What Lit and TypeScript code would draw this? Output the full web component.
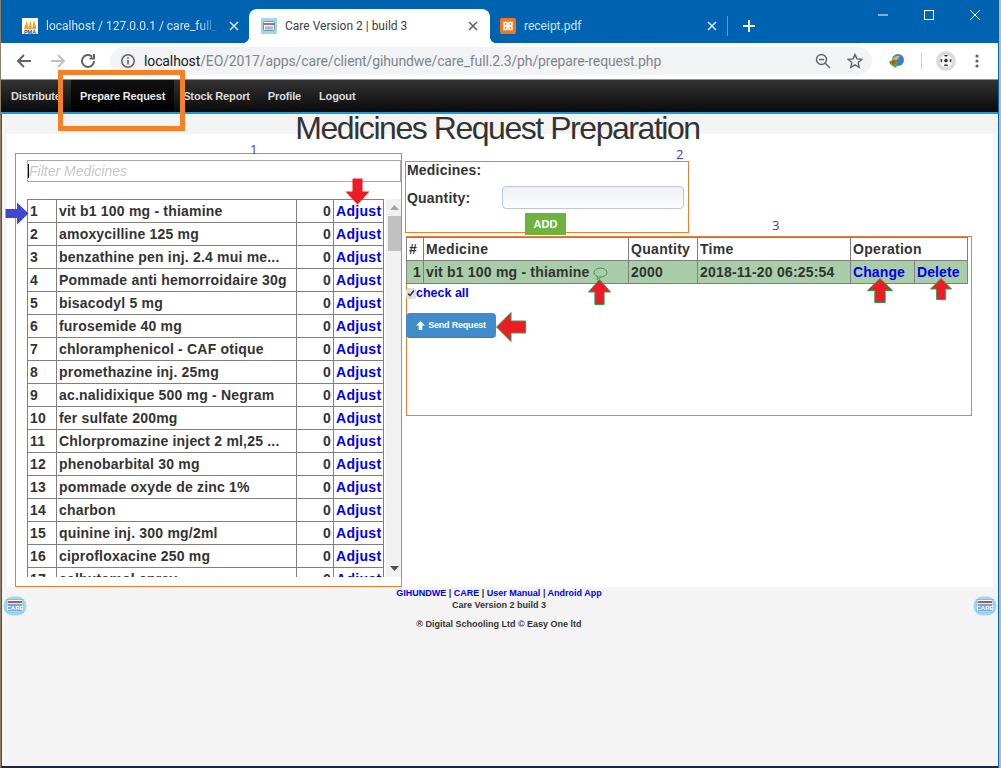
import { LitElement, html, css, svg } from "lit";
import { customElement } from "lit/decorators.js";

const MEDICINES = [
  "vit b1 100 mg - thiamine",
  "amoxycilline 125 mg",
  "benzathine pen inj. 2.4 mui me...",
  "Pommade anti hemorroidaire 30g",
  "bisacodyl 5 mg",
  "furosemide 40 mg",
  "chloramphenicol - CAF otique",
  "promethazine inj. 25mg",
  "ac.nalidixique 500 mg - Negram",
  "fer sulfate 200mg",
  "Chlorpromazine inject 2 ml,25 ...",
  "phenobarbital 30 mg",
  "pommade oxyde de zinc 1%",
  "charbon",
  "quinine inj. 300 mg/2ml",
  "ciprofloxacine 250 mg",
  "salbutamol spray",
];

const careIcon = (w: number, h: number) => html`
  <svg width=${w} height=${h} viewBox="0 0 24 20">
    <rect x="0.5" y="0.5" width="23" height="19" rx="9" fill="#9fd8ea" />
    <rect x="4" y="3.5" width="16" height="12.5" fill="#f2fafc" stroke="#7cc4da" />
    <rect x="5" y="5" width="14" height="2" fill="#c0504d" />
    <rect x="5" y="8" width="14" height="7" fill="#6fa8d6" />
    <text x="12" y="14.2" font-size="6" font-weight="700" text-anchor="middle" fill="#fff" font-family="Liberation Sans">CARE</text>
  </svg>
`;

// points of a block arrow pointing up, drawn in a w x h box
const upArrow = (w: number, h: number) => {
  const head = h * 0.5;
  const a = w * 0.3;
  return `${w / 2},0.5 ${w - 0.5},${head} ${w - a},${head} ${w - a},${h - 0.5} ${a},${h - 0.5} ${a},${head} 0.5,${head}`;
};

@customElement("app-root")
export class AppRoot extends LitElement {
  static styles = css`
    :host {
      display: block;
      height: 768px;
      overflow: hidden;
      background: #a9bccb;
      font-family: "Liberation Sans", Arial, sans-serif;
    }
    .window {
      position: relative;
      width: 999px;
      height: 768px;
      box-sizing: border-box;
      border-left: 1px solid #8f8066;
      border-right: 1px solid #0063b1;
      background: linear-gradient(to right, #0063b1 1px, #f4f4f4 1px);
      overflow: hidden;
    }
    .window::after {
      content: "";
      position: absolute;
      left: 0;
      right: 0;
      bottom: 0;
      height: 2px;
      background: #1c2a3a;
    }

    /* browser chrome */
    .tabs {
      display: flex;
      height: 43px;
      box-sizing: border-box;
      padding: 9px 0 0 8px;
      background: #0063b1;
      align-items: stretch;
    }
    .tab {
      position: relative;
      flex: 0 0 239px;
      min-width: 0;
      box-sizing: border-box;
      display: flex;
      align-items: center;
      padding: 0 7px 0 13px;
      gap: 8px;
      height: 34px;
      color: #d5e4f2;
      font: 12px Roboto, sans-serif;
    }
    .tab > * {
      position: relative;
    }
    .tab.active {
      color: #3c4043;
    }
    .tab.active::before {
      content: "";
      position: absolute;
      left: 1px;
      right: -3px;
      top: 0;
      bottom: 0;
      background: #fff;
      border-radius: 8px 8px 0 0;
    }
    .tab.active::after {
      content: "";
      position: absolute;
      left: -6px;
      right: -10px;
      bottom: 0;
      height: 7px;
      background:
        radial-gradient(circle at 0 0, #0063b1 7px, #fff 7.5px) left / 7px 7px no-repeat,
        radial-gradient(circle at 100% 0, #0063b1 7px, #fff 7.5px) right / 7px 7px no-repeat;
    }
    .tab-title {
      flex: 1;
      white-space: nowrap;
      overflow: hidden;
      min-width: 0;
    }
    .tab-title.fade {
      -webkit-mask-image: linear-gradient(to right, #000 88%, transparent 100%);
      mask-image: linear-gradient(to right, #000 88%, transparent 100%);
    }
    .tab-sep {
      width: 1px;
      height: 20px;
      margin: 7px 0 0 1px;
      background: #5d9ad0;
    }
    .tab-new {
      margin: 6px 0 0 10px;
    }
    .win-controls {
      margin-left: auto;
      display: flex;
      margin-top: -9px;
    }
    .win-controls div {
      width: 46px;
      height: 30px;
      display: flex;
      align-items: center;
      justify-content: center;
    }
    .toolbar {
      display: flex;
      align-items: center;
      height: 36px;
      background: #fff;
      padding-left: 14px;
    }
    .tool {
      flex: none;
      width: 18px;
      height: 18px;
      margin-right: 16px;
    }
    .tool.fwd {
      margin-right: 12px;
    }
    .omnibox {
      flex: none;
      display: flex;
      align-items: center;
      width: 762px;
      height: 28px;
      box-sizing: border-box;
      margin-left: -3px;
      padding: 0 9px 0 10px;
      background: #f1f3f4;
      border-radius: 14px;
      font: 14px Roboto, sans-serif;
      letter-spacing: -0.12px;
      color: #80868b;
      white-space: nowrap;
    }
    .omnibox b {
      font-weight: 400;
      color: #202124;
    }
    .omnibox .url {
      flex: 1;
      margin-left: 8px;
    }
    .omnibox svg {
      flex: none;
    }
    .tool-right {
      display: flex;
      align-items: center;
      margin-left: 16px;
    }
    .tool-sep {
      width: 1px;
      height: 16px;
      background: #ccc;
      margin: 0 14px 0 15px;
    }

    /* site nav */
    .nav {
      display: flex;
      align-items: stretch;
      height: 35px;
      box-sizing: border-box;
      padding-left: 1px;
      border-top: 1px solid #8f8f8f;
      border-bottom: 2px solid #1b9ad6;
      background: linear-gradient(#333, #0a0a0a);
      font-size: 11px;
      font-weight: 700;
      letter-spacing: -0.15px;
      color: #dcdcdc;
    }
    .nav a {
      display: flex;
      align-items: center;
      padding: 0 9px;
    }
    .nav a.first {
      width: 51px;
      overflow: hidden;
    }
    .nav a.on {
      background: linear-gradient(#111, #000);
      color: #e8e8e8;
    }

    /* page */
    .title {
      margin: 0;
      height: 20px;
      padding-right: 4px;
      text-align: center;
      font-weight: 400;
      font-size: 32px;
      line-height: 28px;
      letter-spacing: -1.45px;
      color: #333;
      position: relative;
      z-index: 1;
    }
    .card {
      display: flex;
      align-items: flex-start;
      margin: 0 5px 0 6px;
      height: 453px;
      box-sizing: border-box;
      padding: 19px 0 0 8px;
      background: #fff;
    }
    .panel-list {
      flex: none;
      width: 387px;
      height: 434px;
      box-sizing: border-box;
      border: 1px solid #ed7d31;
      padding: 6px 0 0 11px;
    }
    .filter {
      display: block;
      width: 374px;
      height: 22px;
      box-sizing: border-box;
      margin-right: -1px;
      padding: 0 0 0 1px;
      border: 1px solid #a9a9a9;
      background: linear-gradient(#000, #000) 0 3px / 1px 14px no-repeat;
      font: italic 14px "Liberation Sans", sans-serif;
      outline: none;
    }
    .filter::placeholder {
      color: #c8c8c8;
    }
    .list-wrap {
      display: flex;
      margin-top: 17px;
      height: 378px;
      overflow: hidden;
    }
    table {
      border-collapse: collapse;
      table-layout: fixed;
      font-size: 14px;
      font-weight: 700;
      color: #333;
      letter-spacing: 0.2px;
    }
    td,
    th {
      border: 1px solid #808080;
      height: 23px;
      padding: 0 2px;
      box-sizing: border-box;
      white-space: nowrap;
      overflow: hidden;
      text-align: left;
    }
    .num {
      text-align: right;
    }
    a.link {
      color: #0000f0;
      text-decoration: none;
    }
    .meds {
      width: 356px;
      flex: none;
      align-self: flex-start;
    }
    .meds a.link {
      letter-spacing: 0.3px;
    }
    .scrollbar {
      flex: none;
      width: 17px;
      margin-left: 2px;
      background: #f1f1f1;
      position: relative;
      display: flex;
      flex-direction: column;
      align-items: center;
      justify-content: space-between;
      padding: 6px 0;
      box-sizing: border-box;
    }
    .thumb {
      position: absolute;
      left: 2px;
      right: 2px;
      top: 17px;
      height: 35px;
      background: #c1c1c1;
    }
    .right-col {
      flex: none;
      margin-left: 3px;
      padding-top: 8px;
    }
    .panel-form {
      width: 284px;
      height: 72px;
      box-sizing: border-box;
      border: 1px solid #ed7d31;
      padding-left: 1px;
      font-size: 14px;
      font-weight: 700;
      color: #333;
      letter-spacing: 0.2px;
    }
    .form-label {
      height: 16px;
      line-height: 16px;
    }
    .form-row {
      display: flex;
      align-items: center;
      margin-top: 8px;
    }
    .form-row label {
      width: 95px;
    }
    .qty {
      width: 182px;
      height: 23px;
      box-sizing: border-box;
      border: 1px solid #b9c6de;
      border-radius: 4px;
      background: linear-gradient(#eef0f4, #fdfdfe);
      outline: none;
    }
    .add {
      display: block;
      position: relative;
      width: 41px;
      height: 22px;
      margin: 4px 0 0 118px;
      border: 0;
      padding: 0;
      background: #6cb33f;
      color: #fff;
      font: 700 11px "Liberation Sans", sans-serif;
    }
    .panel-orders {
      width: 566px;
      height: 180px;
      margin: 3px 0 0 1px;
      box-sizing: border-box;
      border: 1px solid #ed7d31;
    }
    .orders {
      width: 561px;
      margin-left: -1px;
    }
    .orders th {
      letter-spacing: 0.3px;
    }
    .orders a.link {
      letter-spacing: 0.1px;
    }
    .orders tr.row td {
      background: #a9cda8;
    }
    .check-all {
      display: flex;
      align-items: center;
      height: 16px;
      margin-top: 1px;
      font-size: 12.5px;
      font-weight: 700;
    }
    .check-all input {
      width: 10px;
      height: 11px;
      margin: 0 0 0 -1px;
      accent-color: #e0e0e0;
    }
    .send {
      display: flex;
      align-items: center;
      justify-content: center;
      gap: 3px;
      width: 90px;
      height: 25px;
      margin-top: 12px;
      border: 0;
      padding: 0;
      margin-left: -1px;
      border-radius: 4px;
      background: #428bca;
      border-bottom: 1px solid #357ebd;
      color: #fff;
      font: 700 9px "Liberation Sans", sans-serif;
      letter-spacing: -0.2px;
    }
    .speech {
      vertical-align: -3px;
      margin-left: -1px;
    }

    /* footer */
    .footer {
      display: flex;
      justify-content: space-between;
      align-items: flex-start;
      padding: 0 1px 0 2px;
      font-size: 9px;
      font-weight: 700;
      color: #333;
      text-align: center;
    }
    .footer > svg {
      margin-top: 9px;
      flex: none;
    }
    .foot-text {
      padding-top: 1px;
      margin-right: 2px;
      line-height: 11px;
    }
    .foot-text p {
      margin: 0;
      line-height: 13px;
    }
    .foot-text p.copy {
      margin-top: 6px;
    }

    /* annotations over the screenshot */
    .mark {
      position: absolute;
      overflow: visible;
    }
    .hl {
      position: absolute;
      left: 57px;
      top: 70px;
      width: 127px;
      height: 61px;
      box-sizing: border-box;
      border: 5px solid #f58026;
    }
    .tag {
      position: absolute;
      color: #3a3ad0;
      font: 13px "Open Sans", sans-serif;
      line-height: 14px;
    }
  `;

  private arrow(x: number, y: number, w: number, h: number, dir: string, fill: string, stroke: string) {
    const rot = dir === "up" ? 0 : dir === "down" ? 180 : dir === "left" ? 270 : 90;
    const bw = rot === 90 || rot === 270 ? h : w;
    const bh = rot === 90 || rot === 270 ? w : h;
    const tr = `translate(${w / 2} ${h / 2}) rotate(${rot}) translate(${-bw / 2} ${-bh / 2})`;
    return html`<svg class="mark" style="left:${x}px;top:${y}px" width=${w} height=${h}>
      ${svg`<polygon transform=${tr} points=${upArrow(bw, bh)} fill=${fill} stroke=${stroke} />`}
    </svg>`;
  }

  private renderTabs() {
    return html`
      <div class="tabs">
        <div class="tab">
          <svg width="16" height="16" viewBox="0 0 16 16">
            <rect width="16" height="16" fill="#fff" />
            <path d="M2 11 5 2 6.5 11ZM6 11 8.5 2 10 11ZM10 11 12 2 14.5 11Z" fill="#f2a31b" />
            <text x="8" y="15.5" font-size="5.5" font-weight="700" text-anchor="middle" fill="#2a4a8a" font-family="Liberation Sans">PMA</text>
          </svg>
          <span class="tab-title fade">localhost / 127.0.0.1 / care_full_v1</span>
          <svg width="14" height="14" viewBox="0 0 14 14"><path d="M3 3l8 8M11 3l-8 8" stroke="#d5e4f2" stroke-width="1.6" /></svg>
        </div>
        <div class="tab active">
          <svg width="16" height="16" viewBox="0 0 16 16">
            <rect width="16" height="16" fill="#9fd8ea" />
            <rect x="2.5" y="3.5" width="11" height="9" rx="1" fill="#f2fafc" stroke="#7f8fa0" />
            <rect x="3" y="5" width="10" height="2" fill="#d0605d" />
            <rect x="4" y="8.5" width="8" height="3" fill="#8fbbe0" />
          </svg>
          <span class="tab-title">Care Version 2 | build 3</span>
          <svg width="14" height="14" viewBox="0 0 14 14"><path d="M3 3l8 8M11 3l-8 8" stroke="#5f6368" stroke-width="1.6" /></svg>
        </div>
        <div class="tab">
          <svg width="16" height="16" viewBox="0 0 16 16">
            <rect width="16" height="16" rx="2" fill="#f0761f" />
            <path d="M4 4.5h3v2.5h2V4.5h3V7l-2 1 2 1v2.5H9V9H7v2.5H4V9l2-1-2-1Z" fill="none" stroke="#fff" stroke-width="1.4" />
          </svg>
          <span class="tab-title">receipt.pdf</span>
          <svg width="14" height="14" viewBox="0 0 14 14"><path d="M3 3l8 8M11 3l-8 8" stroke="#d5e4f2" stroke-width="1.6" /></svg>
        </div>
        <div class="tab-sep"></div>
        <svg class="tab-new" width="22" height="22" viewBox="0 0 22 22"><path d="M11 5v12M5 11h12" stroke="#eef4fa" stroke-width="2" /></svg>
        <div class="win-controls">
          <div><svg width="12" height="12"><path d="M1 6h10" stroke="#fff" /></svg></div>
          <div><svg width="12" height="12"><rect x="1.5" y="1.5" width="9" height="9" fill="none" stroke="#fff" /></svg></div>
          <div><svg width="12" height="12"><path d="M1 1l10 10M11 1L1 11" stroke="#fff" /></svg></div>
        </div>
      </div>
    `;
  }

  private renderToolbar() {
    return html`
      <div class="toolbar">
        <svg class="tool" viewBox="0 0 18 18"><path d="M16 9H3M9 3 3 9l6 6" fill="none" stroke="#5f6368" stroke-width="2" /></svg>
        <svg class="tool fwd" viewBox="0 0 18 18"><path d="M2 9h13M9 3l6 6-6 6" fill="none" stroke="#bdc1c6" stroke-width="2" /></svg>
        <svg class="tool" viewBox="0 0 18 18"><path d="M15 9a6 6 0 1 1-1.8-4.3M15 2v4.5h-4.500" fill="none" stroke="#5f6368" stroke-width="2" /></svg>
        <div class="omnibox">
          <svg width="16" height="16" viewBox="0 0 16 16">
            <circle cx="8" cy="8" r="6.2" fill="none" stroke="#5f6368" stroke-width="1.5" />
            <path d="M8 7v4.500M8 4.300v1.500" stroke="#5f6368" stroke-width="1.6" />
          </svg>
          <span class="url"><b>localhost</b>/EO/2017/apps/care/client/gihundwe/care_full.2.3/ph/prepare-request.php</span>
          <svg width="16" height="16" viewBox="0 0 16 16" style="margin-right:16px">
            <circle cx="6.500" cy="6.500" r="5" fill="none" stroke="#5f6368" stroke-width="1.4" />
            <path d="M10 10l5 5M4 6.500h5" stroke="#5f6368" stroke-width="1.4" />
          </svg>
          <svg width="16" height="16" viewBox="0 0 16 16">
            <path d="M8 1.500l2 4.400 4.800.5-3.600 3.200 1 4.700L8 11.900l-4.200 2.400 1-4.700L1.200 6.400 6 5.900Z" fill="none" stroke="#5f6368" stroke-width="1.4" />
          </svg>
        </div>
        <div class="tool-right">
          <svg width="18" height="16" viewBox="0 0 18 16">
            <circle cx="10" cy="7" r="6" fill="#3a7bd5" />
            <path d="M4 7c2-4 6-5 8-4l-3 4Z" fill="#e8b92c" />
            <path d="M1 9c2-2 4-3 7-2l2 3-2 5C5 13 2 12 1 9Z" fill="#4caf3c" />
            <path d="M3 9l4-2 1 3-3 2Z" fill="#d8402c" />
          </svg>
          <div class="tool-sep"></div>
          <svg width="20" height="20" viewBox="0 0 20 20">
            <circle cx="10" cy="10" r="10" fill="#dcdcdc" />
            <circle cx="10" cy="10" r="6" fill="#fff" />
            <path d="M10 7.500l2 1.500-.8 2.300H8.800L8 9ZM4.500 8l1.800.5v2L4.800 11.500ZM15.500 8l-1.800.5v2l1.500 1ZM8 15l.5-1.500h3L12 15ZM8 4.800l2 1 2-1-1-.8H9Z" fill="#333" />
          </svg>
          <svg width="4" height="16" viewBox="0 0 4 16" style="margin-left:19px">
            <circle cx="2" cy="3" r="1.600" fill="#5f6368" />
            <circle cx="2" cy="8" r="1.600" fill="#5f6368" />
            <circle cx="2" cy="13" r="1.600" fill="#5f6368" />
          </svg>
        </div>
      </div>
    `;
  }

  private renderList() {
    return html`
      <div class="panel-list">
        <input class="filter" placeholder="Filter Medicines" />
        <div class="list-wrap">
          <table class="meds">
            <colgroup>
              <col style="width:29px" /><col style="width:240px" /><col style="width:37px" /><col style="width:50px" />
            </colgroup>
            ${MEDICINES.map(
              (name, i) => html`<tr>
                <td>${i + 1}</td>
                <td>${name}</td>
                <td class="num">0</td>
                <td><a class="link">Adjust</a></td>
              </tr>`
            )}
          </table>
          <div class="scrollbar">
            <svg width="9" height="5"><path d="M4.500 0 9 5H0Z" fill="#a3a3a3" /></svg>
            <div class="thumb"></div>
            <svg width="9" height="5"><path d="M0 0h9L4.500 5Z" fill="#505050" /></svg>
          </div>
        </div>
      </div>
    `;
  }

  private renderRight() {
    return html`
      <div class="right-col">
        <div class="panel-form">
          <div class="form-label">Medicines:</div>
          <div class="form-row">
            <label>Quantity:</label>
            <input class="qty" />
          </div>
          <button class="add">ADD</button>
        </div>
        <div class="panel-orders">
          <table class="orders">
            <colgroup>
              <col style="width:17px" /><col style="width:205px" /><col style="width:69px" /><col style="width:153px" /><col style="width:64px" /><col style="width:53px" />
            </colgroup>
            <tr>
              <th>#</th>
              <th>Medicine</th>
              <th>Quantity</th>
              <th>Time</th>
              <th colspan="2">Operation</th>
            </tr>
            <tr class="row">
              <td class="num">1</td>
              <td>
                vit b1 100 mg - thiamine
                <svg class="speech" width="15" height="13" viewBox="0 0 15 13">
                  <ellipse cx="7.500" cy="5.500" rx="6.500" ry="4.500" fill="none" stroke="#3d9a5a" />
                  <path d="M5 9.500 4 12.500 8 10" fill="#a9cda8" stroke="#3d9a5a" />
                </svg>
              </td>
              <td>2000</td>
              <td>2018-11-20 06:25:54</td>
              <td><a class="link">Change</a></td>
              <td><a class="link">Delete</a></td>
            </tr>
          </table>
          <div class="check-all">
            <input type="checkbox" checked />
            <a class="link">check all</a>
          </div>
          <button class="send">
            <svg width="9" height="9" viewBox="0 0 9 9"><path d="M4.500 0 9 4.500H6.300V9H2.700V4.500H0Z" fill="#fff" /></svg>
            Send Request
          </button>
        </div>
      </div>
    `;
  }

  render() {
    return html`
      <div class="window">
        ${this.renderTabs()} ${this.renderToolbar()}
        <nav class="nav">
          <a class="first">Distribute</a>
          <a class="on">Prepare Request</a>
          <a>Stock Report</a>
          <a>Profile</a>
          <a>Logout</a>
        </nav>
        <h1 class="title">Medicines Request Preparation</h1>
        <div class="card">${this.renderList()} ${this.renderRight()}</div>
        <footer class="footer">
          ${careIcon(24, 20)}
          <div class="foot-text">
            <div>
              <a class="link">GIHUNDWE</a> | <a class="link">CARE</a> | <a class="link">User Manual</a> |
              <a class="link">Android App</a>
            </div>
            <p>Care Version 2 build 3</p>
            <p class="copy">® Digital Schooling Ltd © Easy One ltd</p>
          </div>
          ${careIcon(24, 20)}
        </footer>

        <div class="hl"></div>
        <div class="tag" style="left:249px;top:142px">1</div>
        <div class="tag" style="left:675px;top:147px">2</div>
        <div class="tag" style="left:771px;top:218px">3</div>
        ${this.arrow(4, 202, 24, 23, "right", "#4346d0", "none")}
        ${this.arrow(344, 178, 25, 27, "down", "#ed1c24", "none")}
        ${this.arrow(587, 279, 23, 26, "up", "#ed1c24", "#22a650")}
        ${this.arrow(866, 278, 26, 25, "up", "#ed1c24", "#22a650")}
        ${this.arrow(929, 278, 22, 22, "up", "#ed1c24", "#22a650")}
        ${this.arrow(495, 312, 30, 30, "left", "#ed1c24", "#22a650")}
      </div>
    `;
  }
}
